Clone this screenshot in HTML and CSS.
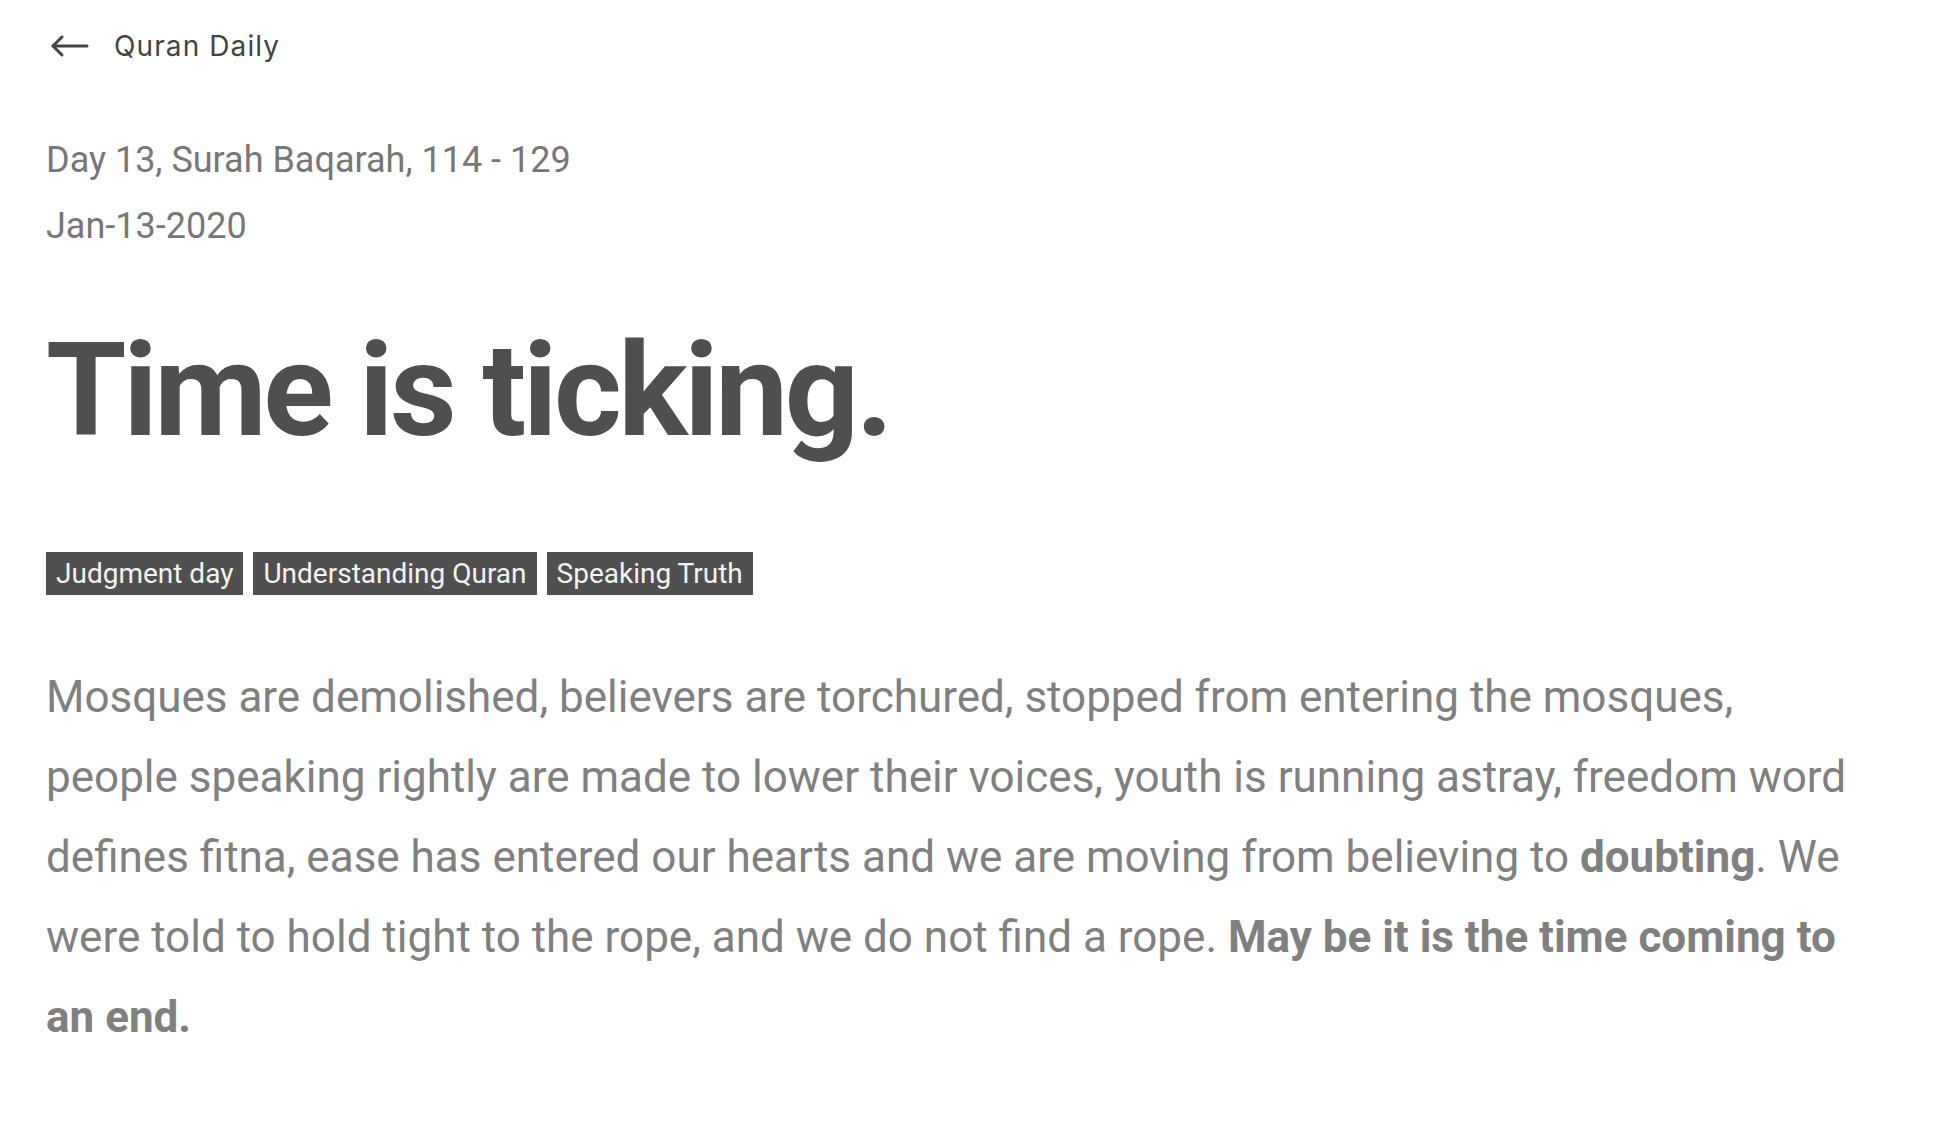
FILE: index.html
```html
<!DOCTYPE html>
<html lang="en">
<head>
<meta charset="utf-8">
<title>Quran Daily</title>
<link rel="stylesheet" href="styles.css">
</head>
<body>
<div class="page">
  <header class="topbar">
    <a class="back" href="#" aria-label="Back">
      <svg width="40" height="24" viewBox="0 0 40 24" fill="none" stroke="#444" stroke-width="3" stroke-linecap="round" stroke-linejoin="round">
        <path d="M38 12H4"/>
        <path d="M13 3L4 12L13 21"/>
      </svg>
    </a>
    <span class="brand">Quran Daily</span>
  </header>
  <main class="post">
    <div class="meta">
      <div class="meta-line">Day 13, Surah Baqarah, 114 - 129</div>
      <div class="meta-line">Jan-13-2020</div>
    </div>
    <h1 class="title">Time is ticking.</h1>
    <div class="tags">
      <span class="tag">Judgment day</span>
      <span class="tag">Understanding Quran</span>
      <span class="tag">Speaking Truth</span>
    </div>
    <p class="body-text">Mosques are demolished, believers are torchured, stopped from entering the mosques, people speaking rightly are made to lower their voices, youth is running astray, freedom word defines fitna, ease has entered our hearts and we are moving from believing to <strong>doubting</strong>. We were told to hold tight to the rope, and we do not find a rope. <strong>May be it is the time coming to an end.</strong></p>
  </main>
</div>
</body>
</html>
```
FILE: styles.css
```css
html, body {
  margin: 0;
  padding: 0;
  background: #ffffff;
}
body {
  font-family: Roboto, "Liberation Sans", sans-serif;
}
.page {
  padding: 0 46px;
}
.topbar {
  display: flex;
  align-items: center;
  gap: 25px;
  height: 92px;
}
.back {
  display: flex;
  align-items: center;
  margin-left: 3px;
}
.brand {
  font-family: Inter, "DejaVu Sans", sans-serif;
  font-size: 28px;
  letter-spacing: 1.1px;
  color: #444;
}
.post {
  max-width: 1820px;
}
.meta {
  margin-top: 35px;
  color: #777;
  font-size: 36px;
  line-height: 66px;
}
.title {
  margin: 52px 0 0;
  font-size: 130px;
  font-weight: 700;
  color: #4f4f4f;
  line-height: 160px;
  letter-spacing: -3.4px;
}
.tags {
  display: flex;
  gap: 10px;
  margin-top: 81px;
}
.tag {
  background: #505050;
  color: #f2f2f2;
  font-size: 28px;
  line-height: 43px;
  padding: 0 10px;
}
.body-text {
  margin: 62px 0 0;
  font-size: 44px;
  line-height: 80px;
  color: #808080;
}
.body-text strong {
  font-weight: 700;
}
```
